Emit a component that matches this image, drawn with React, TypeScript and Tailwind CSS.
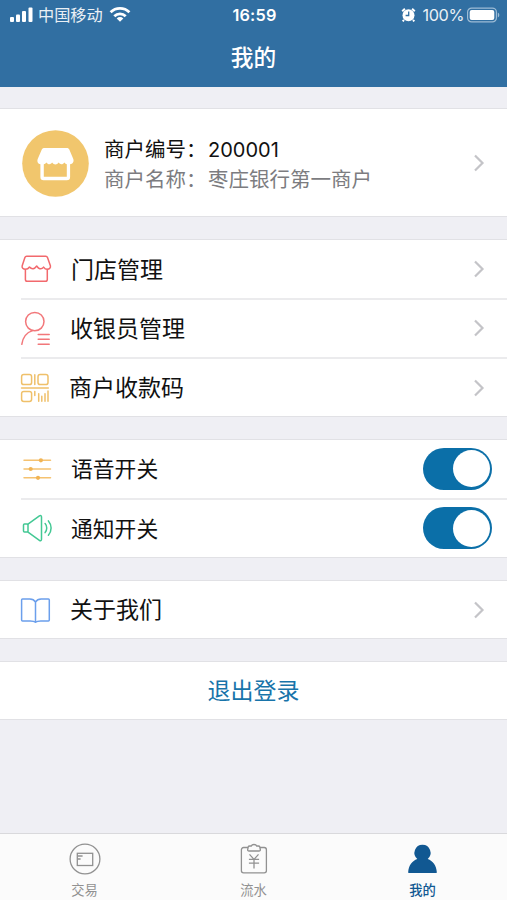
import { type ReactNode, useState } from "react";

type TabName = "trade" | "flow" | "mine";

function StatusBar() {
  return (
    <div className="flex h-[30px] items-center justify-between pl-[9px] pr-[7px] text-white">
      <div className="flex w-[180px] items-center">
        <svg width="25" height="16" viewBox="0 0 25 16" fill="currentColor">
          <rect x="1" y="10" width="4" height="5" rx="1" />
          <rect x="7" y="7.5" width="4" height="7.5" rx="1" />
          <rect x="13" y="4" width="4" height="11" rx="1" />
          <rect x="19.5" y="0.5" width="4" height="14.5" rx="1" />
        </svg>
        <span className="ml-1 text-[16.2px] leading-[30px] opacity-90">
          中国移动
        </span>
        <svg
          className="ml-[6px]"
          width="22"
          height="16"
          viewBox="0 0 22 16"
          fill="none"
          stroke="currentColor"
          strokeWidth="2.8"
        >
          <path d="M1.6 5.3a13.4 13.4 0 0 1 18.8 0" />
          <path d="M5.3 9.3a8.1 8.1 0 0 1 11.4 0" />
          <path d="M11 14.8 7.7 11.4a4.7 4.7 0 0 1 6.6 0z" fill="currentColor" stroke="none" />
        </svg>
      </div>
      <span className="text-[16.3px] font-semibold leading-[30px] tracking-[0.2px]">
        16:59
      </span>
      <div className="flex w-[180px] items-center justify-end">
        <svg width="15" height="15" viewBox="0 0 15 15" fill="none">
          <circle cx="7.5" cy="7.2" r="6" fill="currentColor" />
          <path
            d="M1.2 3.2 3.9.8M13.8 3.2 11.1.8M3 12l-1.3 1.4M12 12l1.3 1.4"
            stroke="currentColor"
            strokeWidth="2"
          />
          <path d="M7.7 3.5v4H4.6" stroke="#316fa2" strokeWidth="1.3" />
        </svg>
        <span className="ml-[6px] text-[16.3px] leading-[30px] tracking-[-0.4px] opacity-90">
          100%
        </span>
        <svg className="ml-[2px]" width="34" height="17" viewBox="0 0 34 17" fill="none">
          <rect
            x="1.6"
            y="1.1"
            width="28.8"
            height="13.8"
            rx="4"
            stroke="#9dbcd5"
            strokeWidth="1.2"
          />
          <rect x="3.7" y="3.1" width="24.6" height="9.8" rx="2" fill="#fff" />
          <path d="M31.8 5.5v5c2-.8 2-4.2 0-5z" fill="#9dbcd5" />
        </svg>
      </div>
    </div>
  );
}

function Chevron() {
  return (
    <svg
      className="mr-[21px]"
      width="14"
      height="18"
      viewBox="0 0 14 18"
      fill="none"
      stroke="#c4c4c8"
      strokeWidth="2.2"
    >
      <path d="m3 1.5 7.5 7.5L3 16.5" />
    </svg>
  );
}

// Shared frame for the outlined icons in the rows
function RowIcon({ color, children }: { color: string; children: ReactNode }) {
  return (
    <svg
      width="34"
      height="36"
      viewBox="0 0 34 36"
      fill="none"
      stroke={color}
      strokeWidth="1.5"
      strokeLinecap="round"
      strokeLinejoin="round"
    >
      {children}
    </svg>
  );
}

const storeIcon = (
  <RowIcon color="#f2696d">
    <path d="M6.6 5.3h19.2c1 0 1.4.4 1.7 1.2l2.9 8.2c.5 2.2-1 3.6-3.1 3.6-1.7 0-2.9-1-3.7-2.2-1 1.3-2.2 2-3.8 1.6-1.4-.3-2-1.2-3.1-2.7-1.1 1.5-1.9 2.4-3.5 2.7-1.5.2-2.6-.4-3.7-1.7-.9 1.3-2 2.3-4 2.3-2.4 0-3.9-1.6-3.3-3.6l2.7-8.2c.3-.8.7-1.2 1.7-1.2z" />
    <path d="M5.4 18.5v10c0 1.2.5 1.8 1.8 1.8h18.2c1.3 0 1.9-.6 1.9-1.8v-10" />
  </RowIcon>
);

const cashierIcon = (
  <RowIcon color="#f2777a">
    <circle cx="14.8" cy="11.6" r="9.2" />
    <path d="M12.5 20.6C6.5 22.5 2.8 27.4 1.8 34.3M18.2 24.4h11M18.2 29.3h11M18.2 34.3h11" />
  </RowIcon>
);

const codeIcon = (
  <RowIcon color="#efc06a">
    <rect x="1.6" y="4.6" width="10" height="10" rx="2.2" />
    <rect x="18" y="4.6" width="10" height="10" rx="2.2" />
    <rect x="1.6" y="21.4" width="10" height="10" rx="2.2" />
    <path d="M14.8 4.8v9.6M1.5 18h26.8M14.8 21.4v4.2M18.7 23.8v7.4M21.8 26.2v5M25 23.8v7.4M28 21v10.3" />
  </RowIcon>
);

const voiceIcon = (
  <RowIcon color="#f5c270">
    <path d="M4 9.3h26.5M4 18h26.5M4 26.8h26.5" />
    <g fill="#f1b454" stroke="none">
      <circle cx="20.9" cy="9.3" r="2.1" />
      <circle cx="10.7" cy="18" r="2.1" />
      <circle cx="18" cy="26.8" r="2.1" />
    </g>
  </RowIcon>
);

const noticeIcon = (
  <RowIcon color="#43c894">
    <rect x="3.5" y="14.1" width="4.5" height="8" rx="1" />
    <path d="m8 14.1 11.4-8.2c1.1-.7 2.1-.3 2.1 1v22.3c0 1.4-1 1.9-2.1 1.1L8 22.1" />
    <path d="M25.1 13.6c2.2 2.5 2.2 6.5 0 9M28.4 10.9c3.6 4.1 3.6 10.3 0 14.4" />
  </RowIcon>
);

const aboutIcon = (
  <RowIcon color="#6b9fec">
    <path d="M15.5 10c-1.2-2-3-3-5.6-3H2.5c-.5 0-.9.3-.9.9V28c0 .6.4.9.9.9h7.7c2.3 0 4.1.2 5.3 1.4 1.2-1.2 3-1.4 5.3-1.4h7.6c.6 0 .9-.3.9-.9V7.9c0-.6-.3-.9-.9-.9h-7.3c-2.6 0-4.4 1-5.6 3zM15.5 10v20" />
  </RowIcon>
);

function Section({ children }: { children: ReactNode }) {
  return (
    <section className="border-y border-[#e1e1e5] bg-white">{children}</section>
  );
}

function Row({
  icon,
  label,
  divider,
  labelClass = "text-[23px]",
  children,
}: {
  icon: ReactNode;
  label: string;
  divider?: boolean;
  labelClass?: string;
  children: ReactNode;
}) {
  return (
    <div className="pl-5">
      <div className="flex h-[57.3px] items-center justify-between">
        <div className="flex items-center">
          <div className="w-[50px]">{icon}</div>
          <span className={`pt-[2px] leading-[55px] text-[#111] ${labelClass}`}>
            {label}
          </span>
        </div>
        {children}
      </div>
      {divider && <div className="ml-px h-[2px] bg-[#ebebed]" />}
    </div>
  );
}

function Toggle({
  label,
  on,
  onToggle,
}: {
  label: string;
  on: boolean;
  onToggle: () => void;
}) {
  return (
    <button
      type="button"
      role="switch"
      aria-checked={on}
      aria-label={label}
      onClick={onToggle}
      className={`mr-[15px] flex h-[42px] w-[69px] items-center rounded-full px-[2.5px] ${
        on ? "justify-end bg-[#0b6fa8]" : "justify-start bg-[#d9d9de]"
      }`}
    >
      <span className="h-[37px] w-[37px] rounded-full bg-white" />
    </button>
  );
}

const tabs: { name: TabName; label: string; icon: ReactNode }[] = [
  {
    name: "trade",
    label: "交易",
    icon: (
      <svg width="34" height="34" viewBox="0 0 34 34" fill="none" stroke="currentColor" strokeWidth="1.3">
        <circle cx="17" cy="17" r="14.9" />
        <rect x="9.3" y="11.3" width="15.4" height="12.2" />
        <path d="M9.6 14h5M9.6 17h3" />
      </svg>
    ),
  },
  {
    name: "flow",
    label: "流水",
    icon: (
      <svg width="34" height="34" viewBox="0 0 34 34" fill="none" stroke="currentColor" strokeWidth="1.3">
        <path d="M11 5.5H6.6c-1.3 0-2.2.9-2.2 2.2v21.1c0 1.3.9 2.1 2.2 2.1h20.6c1.3 0 2.2-.8 2.2-2.1V7.7c0-1.3-.9-2.2-2.2-2.2H23" />
        <path d="M12 9c-1 0-1.5-.6-1.3-1.5L11.2 5c.2-.8.7-1 1.5-1h1.6c.7-2 4.7-2 5.4 0h1.6c.8 0 1.3.2 1.5 1l.5 2.5c.2.9-.3 1.5-1.3 1.5z" />
        <path d="m12.5 12.4 4.5 5 4.5-5M11.9 17.4h10.2M11.9 21.2h10.2M17 17.4v9" />
      </svg>
    ),
  },
  {
    name: "mine",
    label: "我的",
    icon: (
      <svg width="34" height="34" viewBox="0 0 34 34" fill="currentColor">
        <path d="M16.5 2.8a8 8 0 0 1 5.2 14.1c5.2 1.8 8.7 6.5 9.1 13c0 .8-.3 1.2-1.1 1.2H3.3c-.8 0-1.1-.4-1.1-1.2c.4-6.5 3.9-11.2 9.1-13A8 8 0 0 1 16.5 2.8z" />
      </svg>
    ),
  },
];

export default function App() {
  const [voice, setVoice] = useState(true);
  const [notice, setNotice] = useState(true);
  const [activeTab, setActiveTab] = useState<TabName>("mine");

  return (
    <div className="flex h-[900px] w-[507px] flex-col overflow-hidden bg-[#efeff4] font-[Inter,'Noto_Sans_CJK_SC',sans-serif]">
      <header className="h-[87px] bg-[#316fa2]">
        <StatusBar />
        <h1 className="text-center text-[22.7px] font-medium leading-[55px] text-white">
          我的
        </h1>
      </header>

      <main className="flex flex-1 flex-col gap-[22px] pt-[21.4px]">
        <Section>
          <div className="flex h-[107px] items-center pl-[22px]">
            <svg className="mt-px" width="67" height="67" viewBox="0 0 67 67">
              <circle cx="33.5" cy="33.5" r="33.3" fill="#f1c66d" />
              <path
                d="M22.5 18h22.3c1.2 0 2 .5 2.5 1.5l4 9.5c.9 2.7-.6 5-3.2 5.3V47c0 2.2-1 3.3-3.3 3.3H21.6c-2.2 0-3.2-1.1-3.2-3.3V34.2c-2.5-.4-3.6-2.6-2.8-5l4.2-9.7c.5-1 1.4-1.5 2.7-1.5z"
                fill="#fff"
              />
              <path
                d="M21.8 34.2c1-.2 1.8-.8 2.6-1.8 1.6 2.4 4.1 2.4 5.7.2 1.8 2.5 4.8 2.5 6.6 0 1.6 2.2 4.1 2.2 5.7-.2.7 1 1.5 1.6 2.4 1.8v12.6h-23z"
                fill="#f1c66d"
              />
            </svg>
            <div className="ml-[15px] flex-1 pt-1 text-[20.5px] leading-[30px]">
              <p className="flex text-[#111]">
                <span className="w-[104px]">商户编号：</span>
                <span className="text-[20px]">200001</span>
              </p>
              <p className="flex text-[#7c7c80]">
                <span className="w-[104px]">商户名称：</span>
                <span>枣庄银行第一商户</span>
              </p>
            </div>
            <Chevron />
          </div>
        </Section>

        <Section>
          <Row icon={storeIcon} label="门店管理" labelClass="pl-px text-[23px]" divider>
            <Chevron />
          </Row>
          <Row icon={cashierIcon} label="收银员管理" divider>
            <Chevron />
          </Row>
          <Row icon={codeIcon} label="商户收款码" labelClass="-ml-px text-[23px]">
            <Chevron />
          </Row>
        </Section>

        <Section>
          <Row icon={voiceIcon} label="语音开关" labelClass="pl-px text-[21.8px]" divider>
            <Toggle label="语音开关" on={voice} onToggle={() => setVoice(!voice)} />
          </Row>
          <Row icon={noticeIcon} label="通知开关" labelClass="pl-px text-[21.8px]">
            <Toggle label="通知开关" on={notice} onToggle={() => setNotice(!notice)} />
          </Row>
        </Section>

        <Section>
          <Row icon={aboutIcon} label="关于我们">
            <Chevron />
          </Row>
        </Section>

        <Section>
          <button
            type="button"
            className="block h-[57.3px] w-full text-center text-[23px] leading-[58px] text-[#1874aa]"
          >
            退出登录
          </button>
        </Section>
      </main>

      <nav className="grid h-[67px] grid-cols-3 border-t border-[#d9d9dc] bg-[#fbfbfb]">
        {tabs.map((tab) => (
          <button
            key={tab.name}
            type="button"
            onClick={() => setActiveTab(tab.name)}
            className={`flex flex-col items-center pt-2 ${
              activeTab === tab.name
                ? "font-medium text-[#115892]"
                : "text-[#919191]"
            }`}
          >
            {tab.icon}
            <span className="mt-1 text-[13.3px] leading-5">{tab.label}</span>
          </button>
        ))}
      </nav>
    </div>
  );
}
